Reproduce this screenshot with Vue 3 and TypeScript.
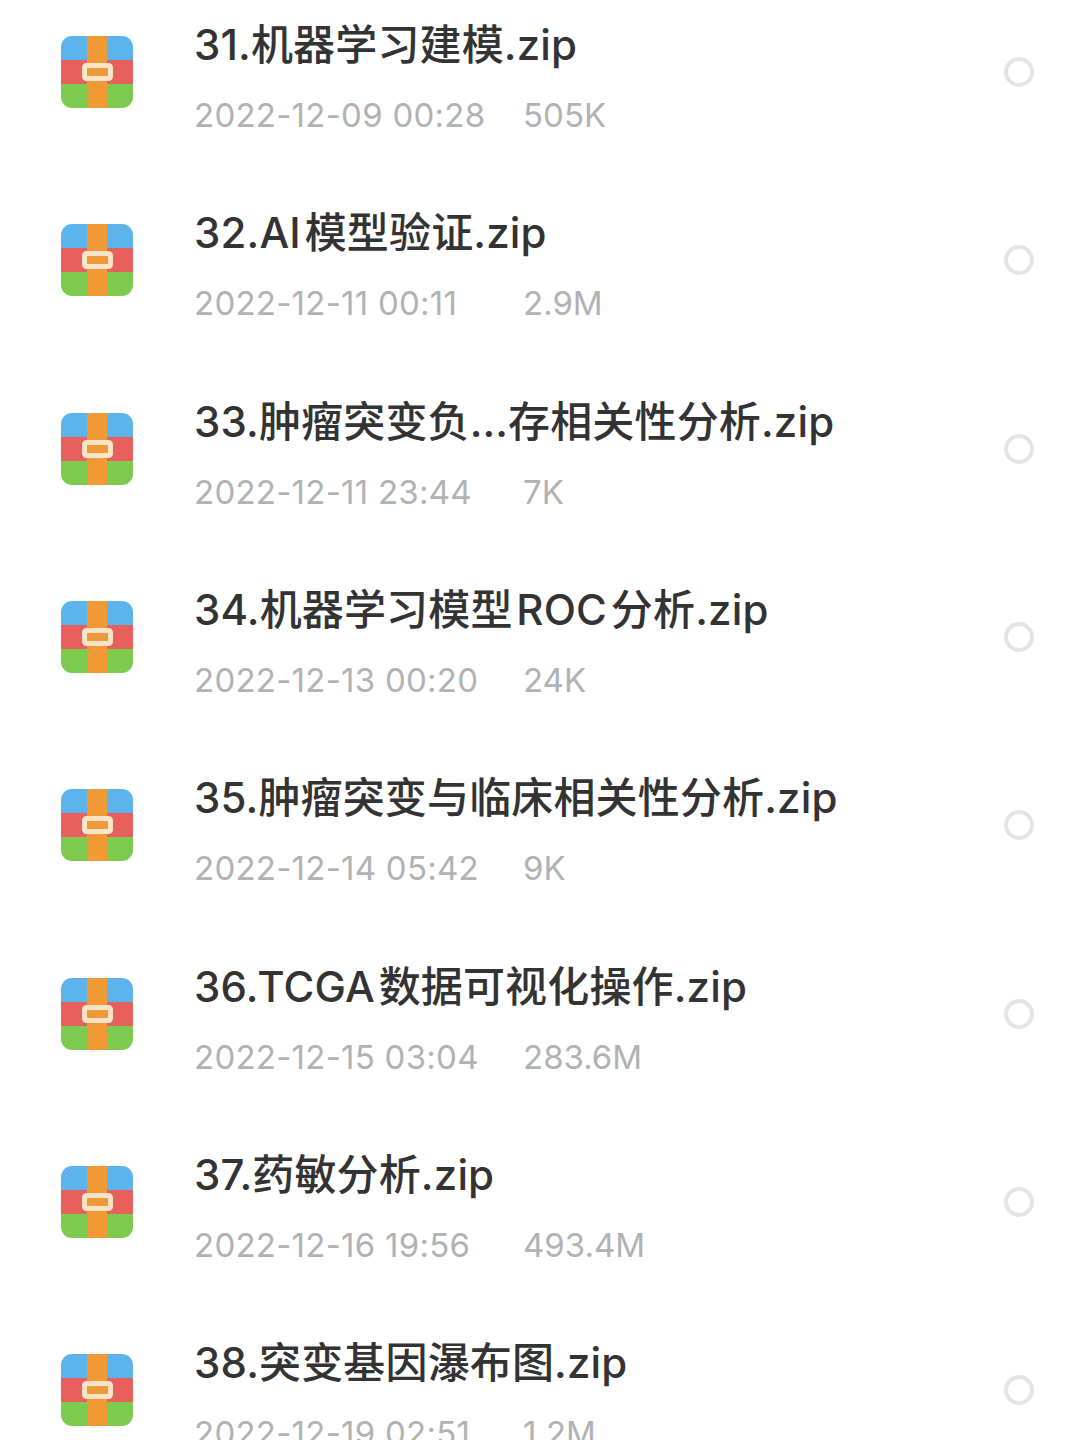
<script setup lang="ts">
interface FileRow {
  name: string
  date: string
  size: string
}

const files: FileRow[] = [
  { name: '31.机器学习建模.zip', date: '2022-12-09 00:28', size: '505K' },
  { name: '32.AI\u200a模型验证.zip', date: '2022-12-11 00:11', size: '2.9M' },
  { name: '33.肿瘤突变负…存相关性分析.zip', date: '2022-12-11 23:44', size: '7K' },
  { name: '34.机器学习模型\u200aROC\u200a分析.zip', date: '2022-12-13 00:20', size: '24K' },
  { name: '35.肿瘤突变与临床相关性分析.zip', date: '2022-12-14 05:42', size: '9K' },
  { name: '36.TCGA\u200a数据可视化操作.zip', date: '2022-12-15 03:04', size: '283.6M' },
  { name: '37.药敏分析.zip', date: '2022-12-16 19:56', size: '493.4M' },
  { name: '38.突变基因瀑布图.zip', date: '2022-12-19 02:51', size: '1.2M' },
]
</script>

<template>
  <div class="page">
    <ul class="file-list">
      <li v-for="file in files" :key="file.name" class="file-row">
        <svg class="zip-icon" viewBox="0 0 72 72" width="72" height="72">
          <defs>
            <clipPath id="zip-clip">
              <rect width="72" height="72" rx="11" />
            </clipPath>
          </defs>
          <g clip-path="url(#zip-clip)">
            <rect width="72" height="24" fill="#5db4ec" />
            <rect y="24" width="72" height="24" fill="#e8605c" />
            <rect y="48" width="72" height="24" fill="#7ccb4f" />
            <rect x="26" width="20" height="72" fill="#f19a35" />
          </g>
          <rect x="23.5" y="29.5" width="26" height="13" rx="2" fill="#ee9a3a" stroke="#f9e4c8" stroke-width="5" />
        </svg>
        <div class="file-info">
          <div class="file-name">{{ file.name }}</div>
          <div class="file-meta">
            <span class="file-date">{{ file.date }}</span>
            <span>{{ file.size }}</span>
          </div>
        </div>
        <span class="radio"></span>
      </li>
    </ul>
  </div>
</template>

<style>
html,
body {
  background: #fff;
}
</style>

<style scoped>
.page {
  height: 1440px;
  overflow: hidden;
  background: #fff;
  font-family: Inter, 'Noto Sans CJK SC', sans-serif;
}

.file-list {
  list-style: none;
  margin: -22px 0 0;
  padding: 0;
}

.file-row {
  display: flex;
  align-items: center;
  height: 188.3px;
  padding: 0 46px 0 61px;
  box-sizing: border-box;
}

.zip-icon {
  flex: none;
  margin-right: 61px;
}

.file-info {
  flex: 1;
  min-width: 0;
  display: flex;
  flex-direction: column;
  gap: 25px;
  padding-top: 11px;
}

.file-name {
  font-size: 42px;
  line-height: 50px;
  font-weight: 500;
  letter-spacing: 0.15px;
  color: #333;
  white-space: nowrap;
}

.file-meta {
  display: flex;
  font-size: 33px;
  line-height: 40px;
  color: #b0b2b4;
  white-space: nowrap;
}

.file-date {
  width: 329px;
  letter-spacing: 0.25px;
}

.radio {
  flex: none;
  width: 30px;
  height: 30px;
  border: 4px solid #e4e4e4;
  border-radius: 50%;
  box-sizing: border-box;
}
</style>
